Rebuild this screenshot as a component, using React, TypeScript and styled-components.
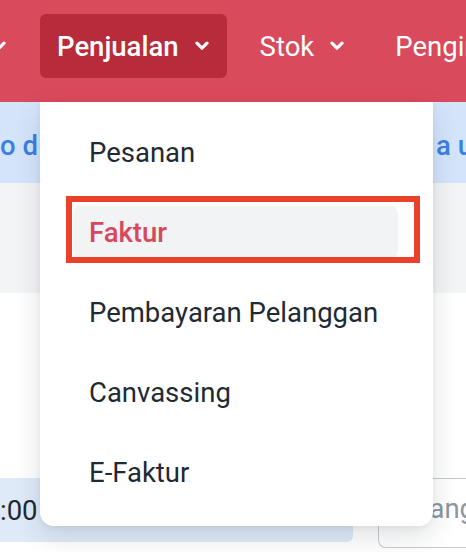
import styled, { createGlobalStyle } from "styled-components";

const GlobalStyle = createGlobalStyle`
  html, body {
    margin: 0;
    padding: 0;
    background: #ffffff;
    overflow: hidden;
  }
  body {
    font-family: Roboto, "Noto Sans", "Liberation Sans", sans-serif;
  }
`;

const Page = styled.div`
  position: relative;
  width: 466px;
  height: 552px;
  overflow: hidden;
  background: #ffffff;
`;

const NavBar = styled.nav`
  display: flex;
  align-items: center;
  gap: 16px;
  height: 102px;
  box-sizing: border-box;
  padding: 14px 0 24px;
  background: #d94a5c;
  white-space: nowrap;
`;

const NavItem = styled.div<{ $active?: boolean; $clipped?: boolean }>`
  display: flex;
  align-items: center;
  justify-content: ${(p) => (p.$clipped ? "flex-end" : "flex-start")};
  gap: 16px;
  flex-shrink: 0;
  height: 64px;
  box-sizing: border-box;
  padding: ${(p) => (p.$clipped ? "0 18px 0 0" : "0 18px 0 17px")};
  border-radius: 6px;
  background: ${(p) => (p.$active ? "#b72b3b" : "transparent")};
  color: #ffffff;
  font-size: 27.5px;
  font-weight: ${(p) => (p.$active ? 500 : 400)};
  width: ${(p) => (p.$clipped ? "24px" : "auto")};
  overflow: hidden;
`;

const Chevron = () => (
  <svg width="14" height="10" viewBox="0 0 14 10" fill="none" style={{ flexShrink: 0 }}>
    <path
      d="M2 2.2 L7 7.2 L12 2.2"
      stroke="#ffffff"
      strokeWidth="3.2"
      strokeLinecap="round"
      strokeLinejoin="round"
    />
  </svg>
);

const Banner = styled.div`
  display: flex;
  justify-content: space-between;
  align-items: center;
  height: 81px;
  background: #d4e5fb;
  color: #3a7fe6;
  font-size: 27.5px;
  font-weight: 500;
  white-space: nowrap;
  overflow: hidden;
  padding-top: 6px;
  box-sizing: border-box;
`;

const BannerText = styled.span<{ $right?: boolean }>`
  flex-shrink: 0;
  width: ${(p) => (p.$right ? "30px" : "auto")};
  overflow: visible;
`;

const GraySection = styled.div`
  height: 110px;
  background: #f3f4f6;
`;

const WhiteSection = styled.div`
  height: 185px;
  background: #ffffff;
`;

const FormRow = styled.div`
  display: flex;
  align-items: flex-start;
  gap: 25px;
`;

const TimeField = styled.div`
  display: flex;
  align-items: center;
  height: 64px;
  width: 353px;
  flex-shrink: 0;
  background: #dfeaf8;
  border-radius: 0 6px 6px 0;
  color: #1f2933;
  font-size: 27.5px;
`;

const InputField = styled.div`
  display: flex;
  align-items: center;
  flex: 1;
  height: 70px;
  box-sizing: border-box;
  border: 1.5px solid #c6cad0;
  border-right: none;
  border-radius: 8px 0 0 8px;
  padding: 0 0 10px 12px;
  color: #8f969e;
  font-size: 27.5px;
  white-space: nowrap;
  overflow: hidden;
`;

const Dropdown = styled.div`
  position: absolute;
  left: 40px;
  top: 102px;
  width: 393px;
  box-sizing: border-box;
  padding: 24px 35px 28px 33px;
  display: flex;
  flex-direction: column;
  gap: 28px;
  background: #ffffff;
  border-radius: 0 0 14px 14px;
  box-shadow: 0 10px 28px rgba(17, 24, 39, 0.13), 0 2px 6px rgba(17, 24, 39, 0.05);
`;

const MenuItem = styled.div<{ $active?: boolean }>`
  height: 52px;
  line-height: 54px;
  padding-left: 16px;
  border-radius: 7px;
  font-size: 27.5px;
  font-weight: ${(p) => (p.$active ? 500 : 400)};
  color: ${(p) => (p.$active ? "#d9475b" : "#1f2a33")};
  background: ${(p) => (p.$active ? "#f2f3f5" : "transparent")};
  white-space: nowrap;
`;

const Highlight = styled.div`
  position: absolute;
  left: 26px;
  top: 94px;
  width: 354px;
  height: 67px;
  box-sizing: border-box;
  border: 6px solid #e9412a;
  pointer-events: none;
`;

const items = ["Pesanan", "Faktur", "Pembayaran Pelanggan", "Canvassing", "E-Faktur"];

export default function App() {
  return (
    <Page>
      <GlobalStyle />
      <NavBar>
        <NavItem $clipped>
          <span>Pembelian</span>
          <Chevron />
        </NavItem>
        <NavItem $active>
          <span>Penjualan</span>
          <Chevron />
        </NavItem>
        <NavItem>
          <span>Stok</span>
          <Chevron />
        </NavItem>
        <NavItem>
          <span>Pengiriman</span>
          <Chevron />
        </NavItem>
      </NavBar>
      <Banner>
        <BannerText>o d</BannerText>
        <BannerText $right>a untuk</BannerText>
      </Banner>
      <GraySection />
      <WhiteSection />
      <FormRow>
        <TimeField>:00</TimeField>
        <InputField>Pelanggan</InputField>
      </FormRow>
      <Dropdown>
        {items.map((item) => (
          <MenuItem key={item} $active={item === "Faktur"}>
            {item}
          </MenuItem>
        ))}
        <Highlight />
      </Dropdown>
    </Page>
  );
}
